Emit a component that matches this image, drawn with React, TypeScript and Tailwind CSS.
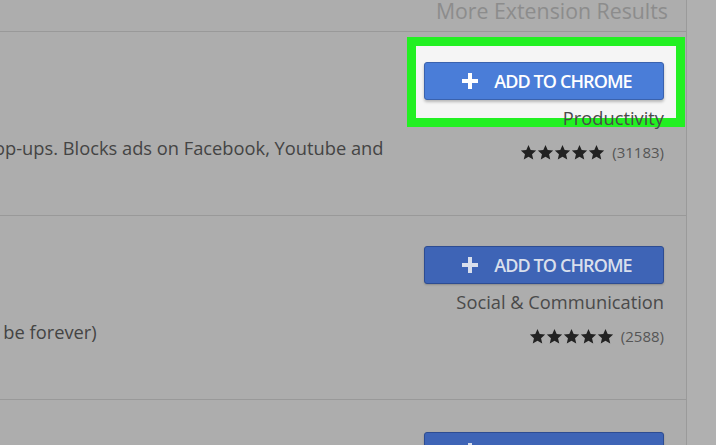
import React from "react";

function Stars() {
  return (
    <div className="flex items-center">
      {[0, 1, 2, 3, 4].map((i) => (
        <svg key={i} width="17" height="17" viewBox="0 0 24 24" className="block">
          <path
            d="M12 1.5l3.1 7.1 7.7.7-5.8 5.1 1.7 7.6L12 18l-6.7 4 1.7-7.6L1.2 9.3l7.7-.7z"
            fill="#222"
          />
        </svg>
      ))}
    </div>
  );
}

function Plus({ color }: { color: string }) {
  return (
    <svg width="16" height="16" viewBox="0 0 16 16" className="block">
      <rect x="6" y="0" width="4" height="16" fill={color} />
      <rect x="0" y="6" width="16" height="4" fill={color} />
    </svg>
  );
}

function AddButton({ highlighted }: { highlighted?: boolean }) {
  return (
    <div
      className={
        highlighted
          ? "relative z-10 flex h-[38px] w-[240px] shrink-0 items-center justify-center gap-[16px] rounded-[3px] border border-[#3a62ae] bg-[#4a7dd8] pl-[6px] shadow-[0_2px_3px_rgba(0,0,0,0.25)]"
          : "relative z-10 flex h-[38px] w-[240px] shrink-0 items-center justify-center gap-[16px] rounded-[3px] border border-[#2d4c92] bg-[#3e64b6] pl-[6px] shadow-[0_1px_2px_rgba(0,0,0,0.2)]"
      }
    >
      <Plus color={highlighted ? "#ffffff" : "#d9dfec"} />
      <span
        className={
          highlighted
            ? "text-[18px] font-semibold leading-none tracking-[-0.9px] text-white"
            : "text-[18px] font-semibold leading-none tracking-[-0.9px] text-[#d9dfec]"
        }
      >
        ADD TO CHROME
      </span>
    </div>
  );
}

function Row({
  desc,
  category,
  count,
  highlighted,
}: {
  desc: string;
  category: string;
  count: string;
  highlighted?: boolean;
}) {
  return (
    <div className="relative flex h-[184px] shrink-0 justify-between border-b border-[#999999]">
      {highlighted && (
        <div className="absolute left-[407px] top-[5px] z-0 h-[90px] w-[278px] border-[9px] border-[#22f022] bg-[#f5f5f5]" />
      )}
      <div className="ml-[-6px] whitespace-nowrap pt-[104px] text-[18.3px] leading-[24px] text-[#444444]">
        {desc}
      </div>
      <div className="mr-[22px] flex w-[240px] flex-col items-end pt-[30px]">
        <AddButton highlighted={highlighted} />
        <div className="relative z-10 mt-[6px] whitespace-nowrap text-[18.3px] leading-[24px] text-[#4a4a4a]">
          {category}
        </div>
        <div className="mt-[12px] flex items-center gap-[7px]">
          <Stars />
          <span className="text-[15px] leading-[20px] text-[#555555]">{count}</span>
        </div>
      </div>
    </div>
  );
}

export default function App() {
  return (
    <div
      className="flex h-[445px] w-[716px] overflow-hidden bg-[#b0b0b0]"
      style={{ fontFamily: "'Open Sans', 'Noto Sans', sans-serif" }}
    >
      <div className="flex w-[687px] shrink-0 flex-col border-r border-[#9a9a9a] bg-[#adadad]">
        <div className="flex h-[32px] shrink-0 items-start justify-end border-b border-[#999999] pr-[18px]">
          <span className="whitespace-nowrap text-[21.3px] leading-[21px] text-[#8c8c8c]">
            More Extension Results
          </span>
        </div>
        <Row
          desc="op-ups. Blocks ads on Facebook, Youtube and"
          category="Productivity"
          count="(31183)"
          highlighted
        />
        <Row
          desc="l be forever)"
          category="Social & Communication"
          count="(2588)"
        />
        <div className="flex shrink-0 justify-end pr-[22px] pt-[32px]">
          <AddButton />
        </div>
      </div>
      <div className="flex-1" />
    </div>
  );
}
